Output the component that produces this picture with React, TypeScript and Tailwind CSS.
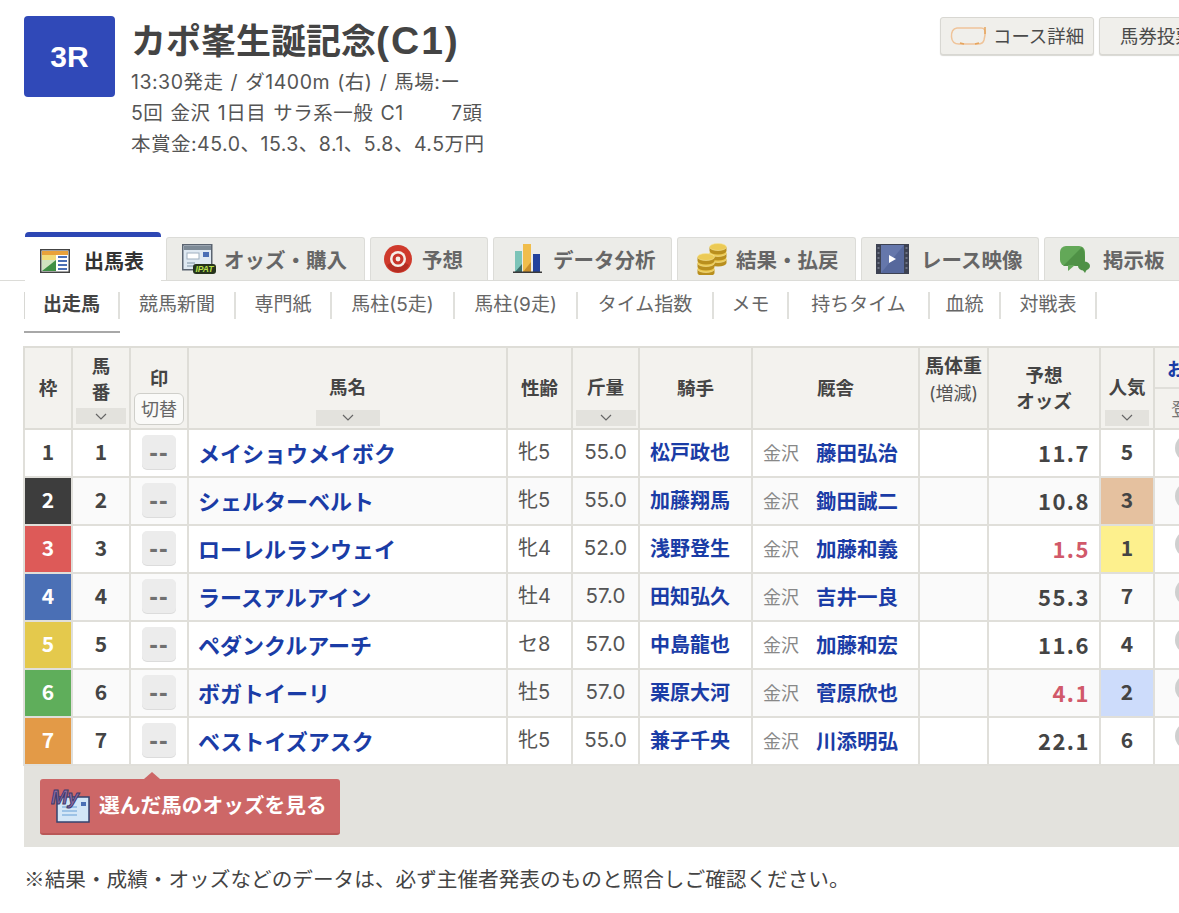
import React from "react";

const rows = [
  { frame: "1", frameClass: "bg-white text-[#444]", name: "メイショウメイボク", sex: "牝5", kg: "55.0", jockey: "松戸政也", trainer: "藤田弘治", odds: "11.7", pop: "5", popClass: "" },
  { frame: "2", frameClass: "bg-[#3d3d3d] text-white", name: "シェルターベルト", sex: "牝5", kg: "55.0", jockey: "加藤翔馬", trainer: "鋤田誠二", odds: "10.8", pop: "3", popClass: "bg-[#e5c19f]" },
  { frame: "3", frameClass: "bg-[#dd5a58] text-white", name: "ローレルランウェイ", sex: "牝4", kg: "52.0", jockey: "浅野登生", trainer: "加藤和義", odds: "1.5", pop: "1", popClass: "bg-[#fdf08d]", hot: true },
  { frame: "4", frameClass: "bg-[#4a6fb5] text-white", name: "ラースアルアイン", sex: "牡4", kg: "57.0", jockey: "田知弘久", trainer: "吉井一良", odds: "55.3", pop: "7", popClass: "" },
  { frame: "5", frameClass: "bg-[#e4c94c] text-white", name: "ペダンクルアーチ", sex: "セ8", kg: "57.0", jockey: "中島龍也", trainer: "加藤和宏", odds: "11.6", pop: "4", popClass: "" },
  { frame: "6", frameClass: "bg-[#5fae5b] text-white", name: "ボガトイーリ", sex: "牡5", kg: "57.0", jockey: "栗原大河", trainer: "菅原欣也", odds: "4.1", pop: "2", popClass: "bg-[#cddcfb]", hot: true },
  { frame: "7", frameClass: "bg-[#e39a47] text-white", name: "ベストイズアスク", sex: "牝5", kg: "55.0", jockey: "兼子千央", trainer: "川添明弘", odds: "22.1", pop: "6", popClass: "" },
];

const subNav = [
  { label: "出走馬", width: "w-[95px]" },
  { label: "競馬新聞", width: "w-[116px]" },
  { label: "専門紙", width: "w-[96px]" },
  { label: "馬柱(5走)", width: "w-[123px]" },
  { label: "馬柱(9走)", width: "w-[123px]" },
  { label: "タイム指数", width: "w-[136px]" },
  { label: "メモ", width: "w-[75px]" },
  { label: "持ちタイム", width: "w-[141px]" },
  { label: "血統", width: "w-[71px]" },
  { label: "対戦表", width: "w-[96px]" },
];

function TableIcon() {
  return (
    <svg width="30" height="24" viewBox="0 0 30 24">
      <rect x="0.75" y="0.75" width="28.5" height="22.5" fill="#fff" stroke="#444" strokeWidth="1.5" />
      <rect x="2" y="2" width="26" height="4" fill="#e9a23b" />
      <rect x="2" y="6" width="14" height="5" fill="#f2dc7a" />
      <rect x="2" y="11" width="14" height="11" fill="#cfe3c0" />
      <path d="M2 22 L16 11 V22 Z" fill="#3f8f45" />
      <path d="M18 8h9M18 12h9M18 16h9M18 20h9" stroke="#4a6fb5" strokeWidth="2" />
    </svg>
  );
}

function IpatIcon() {
  return (
    <svg width="34" height="30" viewBox="0 0 34 30">
      <rect x="0.75" y="0.75" width="29" height="25" fill="#dfe9f2" stroke="#5b6470" strokeWidth="1.5" />
      <rect x="2" y="2" width="27" height="4" fill="#7d8a96" />
      <rect x="5" y="9" width="12" height="6" fill="#fff" stroke="#9fb0bf" />
      <rect x="21" y="8" width="6" height="5" fill="#4a6fb5" />
      <path d="M5 19h8M5 22h8" stroke="#9fb0bf" strokeWidth="1.5" />
      <rect x="11" y="20" width="23" height="10" rx="3" fill="#26331c" />
      <text x="22.5" y="28" textAnchor="middle" fontSize="8.5" fontWeight="700" fontStyle="italic" fill="#b7e04a" fontFamily="'Liberation Sans',sans-serif">IPAT</text>
    </svg>
  );
}

function TargetIcon() {
  return (
    <svg width="28" height="28" viewBox="0 0 28 28">
      <circle cx="14" cy="14" r="14" fill="#cf3a2c" />
      <path d="M3 20 A12 12 0 0 0 25 20 L14 14 Z" fill="#b52d22" />
      <circle cx="14" cy="14" r="8" fill="#f6efe8" />
      <circle cx="14" cy="14" r="5.5" fill="#c9352a" />
      <circle cx="14" cy="14" r="2.4" fill="#f6efe8" />
    </svg>
  );
}

function ChartIcon() {
  return (
    <svg width="29" height="30" viewBox="0 0 29 30">
      <rect x="2" y="7" width="7" height="21" fill="#7cc4b8" />
      <rect x="10" y="0" width="8" height="28" fill="#f0bd4b" />
      <rect x="20" y="10" width="7" height="18" fill="#23429c" />
      <path d="M2 28 L9 20 V28 Z" fill="#3c6e6a" />
      <path d="M10 28 L18 18 V28 Z" fill="#c98f2a" />
      <rect x="0" y="27.5" width="29" height="1.5" fill="#3a3a3a" />
    </svg>
  );
}

function Coin({ cx, cy }: { cx: number; cy: number }) {
  return (
    <g>
      <path d={`M${cx - 8.5} ${cy} v4 a8.5 3.5 0 0 0 17 0 v-4 z`} fill="#b98f1e" />
      <ellipse cx={cx} cy={cy} rx="8.5" ry="3.5" fill="#ecca55" stroke="#f7e59a" strokeWidth="0.6" />
    </g>
  );
}

function CoinsIcon() {
  return (
    <svg width="30" height="32" viewBox="0 0 30 32">
      <Coin cx={21} cy={16} />
      <Coin cx={21} cy={10} />
      <Coin cx={21} cy={4} />
      <Coin cx={9} cy={26} />
      <Coin cx={9} cy={20} />
      <Coin cx={9} cy={14} />
    </svg>
  );
}

function VideoIcon() {
  return (
    <svg width="33" height="30" viewBox="0 0 33 30">
      <rect x="0" y="0" width="33" height="30" fill="#3d4252" />
      <rect x="5" y="1" width="23" height="28" fill="#6577ab" />
      <path d="M5 29 L28 1 V29 Z" fill="#56689c" />
      <path d="M13 11 L20 15 L13 19 Z" fill="#fff" />
      <path d="M1.5 4h2M1.5 9h2M1.5 14h2M1.5 19h2M1.5 24h2M29.5 4h2M29.5 9h2M29.5 14h2M29.5 19h2M29.5 24h2" stroke="#6c7284" strokeWidth="2" />
    </svg>
  );
}

function BubbleIcon() {
  return (
    <svg width="30" height="28" viewBox="0 0 30 28">
      <rect x="0" y="1" width="25" height="20" rx="6" fill="#63a858" />
      <path d="M3 21 L22 2 Q25 6 25 15 Q25 21 19 21 Z" fill="#4f9146" />
      <path d="M8 20 L15 20 L8 26 Z" fill="#63a858" />
      <ellipse cx="24" cy="21" rx="6" ry="4.5" fill="#4f9146" />
      <path d="M22 24 L27 24 L25 28 Z" fill="#4f9146" />
    </svg>
  );
}

function CourseIcon() {
  return (
    <svg width="38" height="20" viewBox="0 0 38 20" className="shrink-0">
      <path d="M7 2 H31 Q36 2 35 9 L34 14 Q33 18 28 18 H9 Q2 18 1.5 11 Q1 3 7 2 Z" fill="none" stroke="#efc49a" strokeWidth="1.5" />
      <path d="M35 1v7" stroke="#e6a45c" strokeWidth="1.5" />
      <path d="M10 17l4 1M25 18l4 -1" stroke="#e6a45c" strokeWidth="1.5" />
    </svg>
  );
}

function MyIcon() {
  return (
    <svg width="40" height="36" viewBox="0 0 40 36">
      <rect x="6" y="10" width="32" height="25" fill="#d3e6f7" stroke="#33436f" strokeWidth="1.5" />
      <path d="M11 20h15M11 24h15M11 28h15" stroke="#9cc2e6" strokeWidth="2" />
      <rect x="30" y="15" width="5" height="4" fill="#4a6fb5" />
      <text x="0" y="17" fontSize="20" fontWeight="700" fontStyle="italic" fill="#8c6a9e" stroke="#3c3a6e" strokeWidth="1" fontFamily="'Liberation Sans',sans-serif">My</text>
    </svg>
  );
}

function SortBar({ width, margin }: { width: string; margin: string }) {
  return (
    <div className={`${width} ${margin} h-[16px] bg-[#e3e2dd] flex items-center justify-center mx-auto`}>
      <svg width="12" height="7" viewBox="0 0 12 7">
        <path d="M1 1 L6 6 L11 1" fill="none" stroke="#666" strokeWidth="1.2" />
      </svg>
    </div>
  );
}

function InactiveTab({ box, icon, label }: { box: string; icon: React.ReactNode; label: string }) {
  return (
    <div className={`${box} shrink-0 h-[43px] bg-[#ecece8] border border-b-0 border-[#dcdcd8] rounded-t-[3px] flex items-center text-[20.5px] font-bold text-[#666]`}>
      {icon}
      <span className="whitespace-nowrap">{label}</span>
    </div>
  );
}

const th = "border-2 border-[#dedDd7] bg-[#f3f2ee] text-[#444] font-bold text-[18.5px] p-0 text-center align-middle";
const td = "border-2 border-[#e0dfda] p-0 pb-[2px] h-[48px]";
const latin = "font-['Inter','Noto_Sans_CJK_JP',sans-serif]";

export default function App() {
  return (
    <div className="w-[1179px] h-[913px] overflow-hidden bg-white font-['Noto_Sans_CJK_JP',sans-serif] text-[#444]">
      {/* race header */}
      <header className="h-[232px] pt-4 pl-6 flex">
        <div className="w-[91px] h-[81px] shrink-0 bg-[#3049b8] rounded-[4px] flex items-center justify-center text-white text-[30px] font-bold font-['Liberation_Sans',sans-serif]">
          3R
        </div>
        <div className="w-[825px] shrink-0 pl-[16px]">
          <h1 className="h-[50px] leading-[50px] text-[35px] font-bold text-[#444] font-['Liberation_Sans','Noto_Sans_CJK_JP',sans-serif] whitespace-nowrap">
            カポ峯生誕記念<span className="text-[39px] tracking-[2px]">(C1)</span>
          </h1>
          <div className={`mt-px text-[#555] text-[19.5px] tracking-[0.5px] [word-spacing:1.2px] leading-[31px] ${latin} whitespace-pre`}>
            <p>13:30発走 / ダ1400m (右) / 馬場:ー</p>
            <p>5回 金沢 1日目 サラ系一般 C1　　 7頭</p>
            <p>本賞金:45.0、15.3、8.1、5.8、4.5万円</p>
          </div>
        </div>
        <div className="flex gap-[5px] h-[38px] mt-px shrink-0">
          <div className="w-[154px] bg-[#f0efeb] border border-[#d8d7d2] rounded-[3px] shadow-[0_1px_1px_#d8d7d2] flex items-center pl-[9px] gap-[5px] text-[18.4px] text-[#4a4a4a] whitespace-nowrap">
            <CourseIcon />
            <span>コース詳細</span>
          </div>
          <div className="w-[154px] bg-[#f0efeb] border border-[#d8d7d2] rounded-[3px] shadow-[0_1px_1px_#d8d7d2] flex items-center pl-[20px] text-[18.4px] text-[#4a4a4a] whitespace-nowrap">
            馬券投票
          </div>
        </div>
      </header>

      {/* main tabs */}
      <nav className="h-[49px] flex items-end gap-[5px] pl-[25px] border-b border-[#dcdcd8]">
        <div className="w-[136px] shrink-0 h-[49px] -mb-px pt-[3px] pl-[15px] bg-white border-t-[5px] border-[#2d47b4] rounded-t-[4px] flex items-center gap-[14px] text-[20px] font-bold text-[#333]">
          <TableIcon />
          <span>出馬表</span>
        </div>
        <InactiveTab box="w-[199px] pl-[15px] gap-[8px]" icon={<IpatIcon />} label="オッズ・購入" />
        <InactiveTab box="w-[118px] pl-[13px] gap-[10px]" icon={<TargetIcon />} label="予想" />
        <InactiveTab box="w-[179px] pl-[19px] gap-[11px]" icon={<ChartIcon />} label="データ分析" />
        <InactiveTab box="w-[179px] pl-[19px] gap-[9px]" icon={<CoinsIcon />} label="結果・払戻" />
        <InactiveTab box="w-[178px] pl-[14px] gap-[12px]" icon={<VideoIcon />} label="レース映像" />
        <InactiveTab box="w-[150px] pl-[15px] gap-[13px]" icon={<BubbleIcon />} label="掲示板" />
      </nav>

      {/* sub tabs */}
      <div className="h-[65px] pl-6 pt-[11px]">
        <div className="flex border-l border-[#d8d8d4] w-fit">
          {subNav.map((item, i) => (
            <div
              key={item.label}
              className={`${item.width} h-[27px] border-r-2 border-[#e0e0dc] flex items-center justify-center text-[19px] whitespace-nowrap ${latin} ${i === 0 ? "font-bold text-[#444]" : "text-[#666]"}`}
            >
              {item.label}
            </div>
          ))}
        </div>
        <div className="w-[96px] h-[2px] mt-[12px] bg-[#a8a8a8]" />
      </div>

      {/* race table */}
      <div className="pl-6">
        <table className="table-fixed border-collapse w-[1230px] -ml-px">
          <colgroup>
            <col className="w-[48px]" />
            <col className="w-[58px]" />
            <col className="w-[58px]" />
            <col className="w-[319px]" />
            <col className="w-[65px]" />
            <col className="w-[67px]" />
            <col className="w-[113px]" />
            <col className="w-[167px]" />
            <col className="w-[69px]" />
            <col className="w-[112px]" />
            <col className="w-[54px]" />
            <col className="w-[100px]" />
          </colgroup>
          <thead>
            <tr className="h-[82px]">
              <th className={th}>枠</th>
              <th className={th}>
                <div className="leading-[26px]">馬<br />番</div>
                <SortBar width="w-[50px]" margin="mt-[4px]" />
              </th>
              <th className={th}>
                <div className="leading-[26px] mt-[12px]">印</div>
                <div className="w-[50px] h-[32px] mx-auto mt-[3px] bg-[#fafaf8] border border-[#cfcfca] rounded-[6px] flex items-center justify-center text-[18px] font-normal text-[#666]">切替</div>
              </th>
              <th className={th}>
                <div className="leading-[40px] mt-[15px]">馬名</div>
                <SortBar width="w-[64px]" margin="mt-[4px]" />
              </th>
              <th className={th}>性齢</th>
              <th className={th}>
                <div className="leading-[40px] mt-[15px]">斤量</div>
                <SortBar width="w-[60px]" margin="mt-[4px]" />
              </th>
              <th className={th}>騎手</th>
              <th className={th}>厩舎</th>
              <th className={`${th} pb-[19px]`}>
                <div className="leading-[29px] text-[19px]">馬体重</div>
                <div className={`leading-[29px] font-normal text-[#555] text-[18px] ${latin}`}>(増減)</div>
              </th>
              <th className={`${th} pb-[3px]`}>
                <div className="leading-[26px]">予想</div>
                <div className="leading-[26px]">オッズ</div>
              </th>
              <th className={th}>
                <div className="leading-[40px] mt-[15px]">人気</div>
                <SortBar width="w-[44px]" margin="mt-[4px]" />
              </th>
              <th className={th}>
                <div className="h-[41px] leading-[40px] text-[#1a3ca6] border-b-2 border-[#e0dfda] whitespace-nowrap">お気に入</div>
                <div className="h-[39px] leading-[38px] font-normal text-[#777] text-left pl-4">登録</div>
              </th>
            </tr>
          </thead>
          <tbody>
            {rows.map((r, i) => (
              <tr key={r.frame} className={i % 2 === 1 ? "bg-[#fafafa]" : "bg-white"}>
                <td className={`${td} ${r.frameClass} text-center text-[21px] font-bold`}>{r.frame}</td>
                <td className={`${td} text-center text-[21px] font-bold text-[#444]`}>{i + 1}</td>
                <td className={td}>
                  <div className="w-[34px] h-[34px] mx-auto rounded-[5px] bg-[#ececec] shadow-[0_1px_0_#dcdcdc] flex items-center justify-center text-[26px] font-bold tracking-[1px] text-[#707070] font-['Liberation_Sans',sans-serif]">--</div>
                </td>
                <td className={`${td} pl-[9px] text-[22px] font-bold text-[#1a3ca6] whitespace-nowrap`}>{r.name}</td>
                <td className={`${td} pl-[10px] text-[20px] text-[#555] ${latin}`}>{r.sex}</td>
                <td className={`${td} text-center text-[20.5px] text-[#555] ${latin}`}>{r.kg}</td>
                <td className={`${td} pl-[10px] text-[20px] font-bold text-[#1a3ca6] whitespace-nowrap`}>{r.jockey}</td>
                <td className={`${td} pl-[10px]`}>
                  <div className="flex items-center whitespace-nowrap">
                    <span className="text-[18px] text-[#888] mr-[17px]">金沢</span>
                    <span className="text-[20.5px] font-bold text-[#1a3ca6]">{r.trainer}</span>
                  </div>
                </td>
                <td className={td}></td>
                <td className={`${td} pr-[9px] text-right text-[22px] font-bold tracking-[1.5px] ${r.hot ? "text-[#d1596a]" : "text-[#444]"}`}>{r.odds}</td>
                <td className={`${td} ${r.popClass} text-center text-[21px] font-bold text-[#444]`}>{r.pop}</td>
                <td className={`${td} pl-[20px]`}>
                  <div className="w-[28px] h-[28px] rounded-full bg-[#cfcfcf] -mt-[8px]" />
                </td>
              </tr>
            ))}
          </tbody>
        </table>

        {/* selected horses bar */}
        <div className="relative h-[81px] bg-[#e3e2dd] pl-4 pt-[13px]">
          <div className="absolute left-[120px] top-[6px] w-0 h-0 border-l-[8px] border-r-[8px] border-b-[7px] border-l-transparent border-r-transparent border-b-[#cd6767]" />
          <div className="w-[300px] h-[56px] bg-[#cd6767] border-b-2 border-[#b95757] rounded-[3px] flex items-center pl-[11px] pb-[3px] gap-[8px] text-white text-[20.7px] font-bold whitespace-nowrap">
            <MyIcon />
            <span>選んだ馬のオッズを見る</span>
          </div>
        </div>

        <p className="mt-[16px] text-[20.65px] leading-[30px] text-[#444] whitespace-nowrap">
          ※結果・成績・オッズなどのデータは、必ず主催者発表のものと照合しご確認ください。
        </p>
      </div>
    </div>
  );
}
